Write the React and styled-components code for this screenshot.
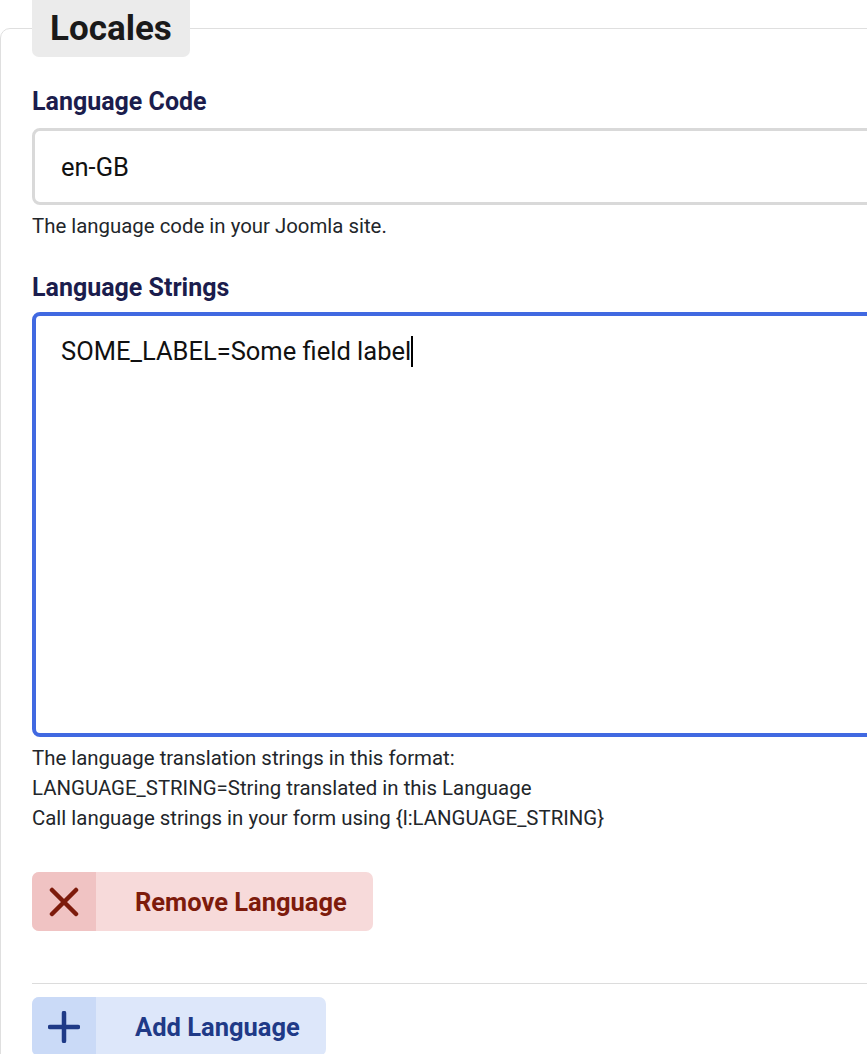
import React from 'react';
import styled, { createGlobalStyle } from 'styled-components';

const GlobalStyle = createGlobalStyle`
    html, body {
        margin: 0;
        padding: 0;
        background: #ffffff;
        overflow-x: hidden;
    }
    body {
        font-family: Roboto, "Liberation Sans", sans-serif;
        color: #22262a;
    }
`;

const Page = styled.div`
    width: calc(100% + 220px);
`;

const Fieldset = styled.fieldset`
    margin: 0;
    padding: 0 31px 40px;
    border: 1px solid #dfdfdf;
    border-radius: 10px;
    min-width: 0;
`;

const Legend = styled.legend`
    margin: 0;
    padding: 0 18px;
    height: 57px;
    line-height: 57px;
    background: #ebebeb;
    border-radius: 0 0 7px 7px;
    font-size: 35px;
    font-weight: 700;
    color: #1a1a1a;
`;

const Field = styled.div`
    display: flex;
    flex-direction: column;
    margin-top: ${p => p.$top || 0}px;
`;

const Label = styled.label`
    font-size: 25px;
    line-height: 36px;
    font-weight: 700;
    color: #1b1d4d;
    margin-bottom: ${p => p.$gap || 8}px;
`;

const Input = styled.div`
    height: 77px;
    box-sizing: border-box;
    border: 3px solid #d9d9d9;
    border-radius: 8px;
    padding: 18px 26px;
    font-size: 25.5px;
    line-height: 36px;
    color: #111;
`;

const TextArea = styled.div`
    height: 425px;
    box-sizing: border-box;
    border: 4px solid #4169e1;
    border-radius: 8px;
    padding: 17px 25px;
    font-size: 25.5px;
    line-height: 36px;
    color: #111;
`;

const Caret = styled.span`
    display: inline-block;
    width: 2px;
    height: 31px;
    background: #000;
    vertical-align: -7px;
`;

const Help = styled.div`
    margin-top: ${p => p.$top || 7}px;
    font-size: 20.4px;
    line-height: ${p => p.$lh || 28}px;
    color: #22262a;
    white-space: nowrap;
`;

const ButtonRow = styled.div`
    display: flex;
    margin-top: ${p => p.$top || 0}px;
`;

const Button = styled.button`
    display: flex;
    align-items: stretch;
    height: 59px;
    padding: 0;
    border: none;
    border-radius: 7px;
    overflow: hidden;
    background: ${p => p.$bg};
    color: ${p => p.$fg};
    font-family: inherit;
    font-size: 25.5px;
    font-weight: 700;
    cursor: pointer;
`;

const IconBox = styled.span`
    width: 64px;
    display: flex;
    align-items: center;
    justify-content: center;
    background: ${p => p.$bg};
`;

const ButtonText = styled.span`
    display: flex;
    align-items: center;
    padding: 0 26px 0 39px;
`;

const Divider = styled.hr`
    margin: 52px 0 13px;
    border: none;
    border-top: 1px solid #dcdcdc;
`;

function CloseIcon() {
    return (
        <svg width="30" height="30" viewBox="0 0 30 30">
            <path d="M3 3 L27 27 M27 3 L3 27" stroke="#7d1b0c" strokeWidth="4.5" strokeLinecap="round" />
        </svg>
    );
}

function PlusIcon() {
    return (
        <svg width="32" height="32" viewBox="0 0 32 32">
            <path d="M16 2 V30 M2 16 H30" stroke="#1f3a87" strokeWidth="4.5" strokeLinecap="round" />
        </svg>
    );
}

export default function App() {
    return (
        <Page>
            <GlobalStyle />
            <Fieldset>
                <Legend>Locales</Legend>
                <Field $top={27}>
                    <Label>Language Code</Label>
                    <Input>en-GB</Input>
                    <Help>The language code in your Joomla site.</Help>
                </Field>
                <Field $top={30}>
                    <Label $gap={6}>Language Strings</Label>
                    <TextArea>SOME_LABEL=Some field label<Caret /></TextArea>
                    <Help $top={6} $lh={30}>
                        The language translation strings in this format:<br />
                        LANGUAGE_STRING=String translated in this Language<br />
                        Call language strings in your form using {'{l:LANGUAGE_STRING}'}
                    </Help>
                </Field>
                <ButtonRow $top={39}>
                    <Button $bg="#f7dada" $fg="#7d1b0c">
                        <IconBox $bg="#f0c3c3"><CloseIcon /></IconBox>
                        <ButtonText>Remove Language</ButtonText>
                    </Button>
                </ButtonRow>
                <Divider />
                <ButtonRow>
                    <Button $bg="#dde7fa" $fg="#1f3a87">
                        <IconBox $bg="#cadaf7"><PlusIcon /></IconBox>
                        <ButtonText>Add Language</ButtonText>
                    </Button>
                </ButtonRow>
            </Fieldset>
        </Page>
    );
}
